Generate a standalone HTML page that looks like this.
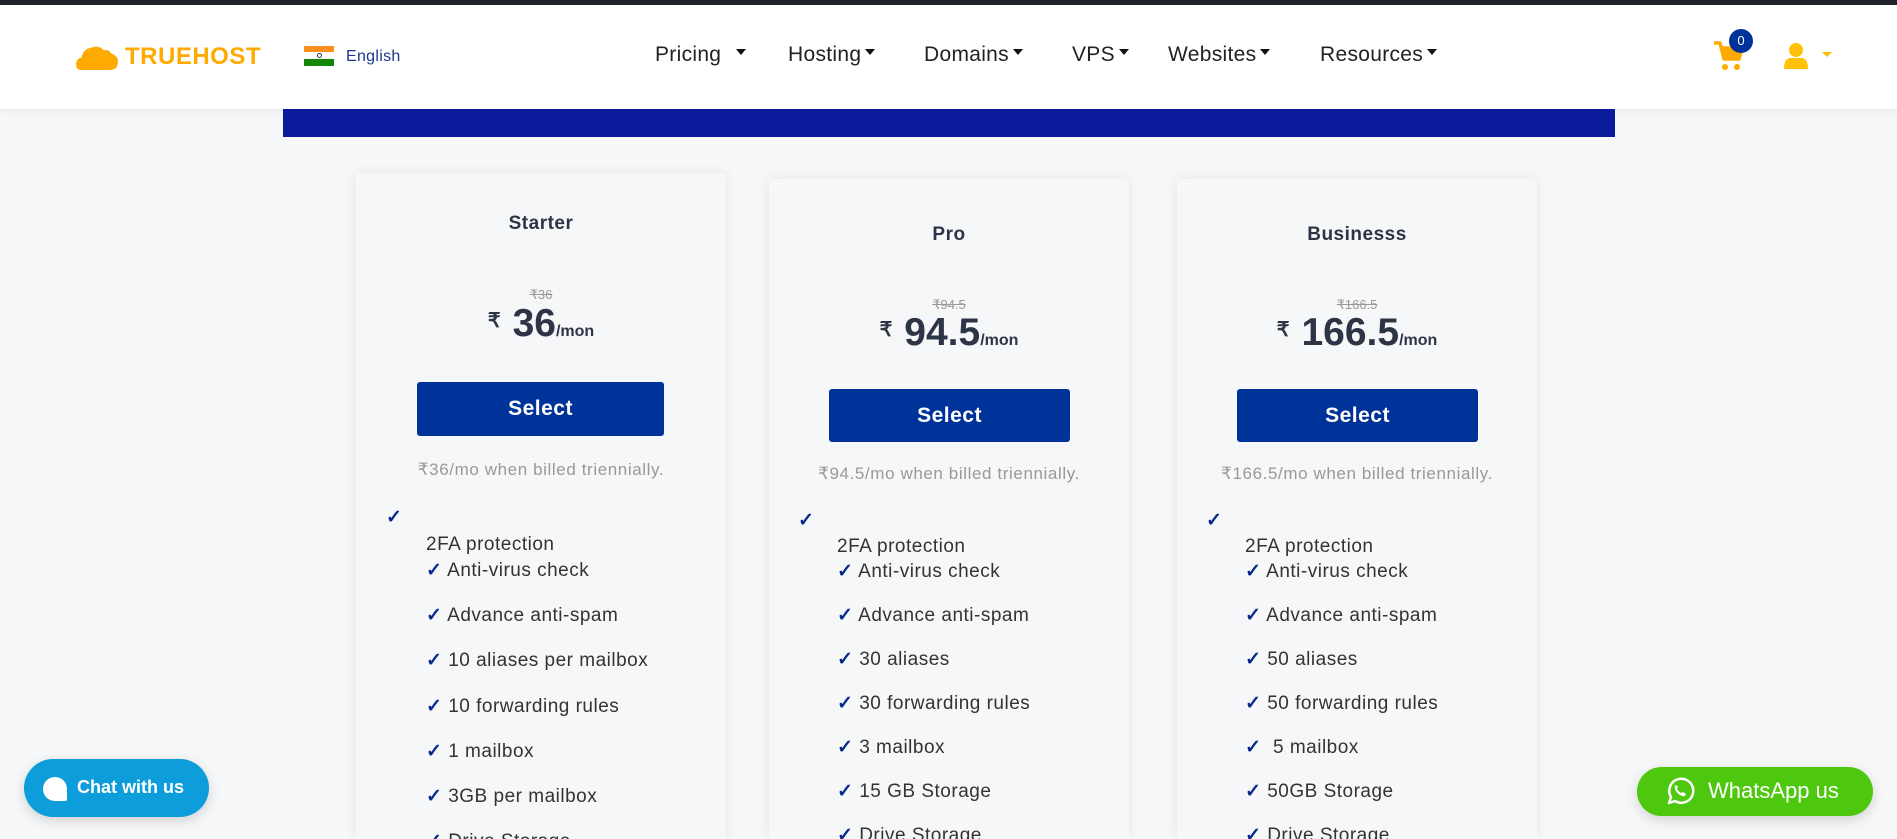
<!DOCTYPE html>
<html style="overflow:hidden;height:839px"><head><meta charset="utf-8">
<style>
*{margin:0;padding:0;box-sizing:border-box}
body{width:1897px;height:839px;overflow:hidden;background:#f6f7f9;font-family:"Liberation Sans",sans-serif;position:relative;color:#333}
.top{position:absolute;left:0;top:0;width:1897px;height:5px;background:#1f222b}
.hdr{position:absolute;left:0;top:5px;width:1897px;height:104px;background:#fff;box-shadow:0 2px 6px rgba(0,0,0,.06)}
.blue{position:absolute;left:283px;top:109px;width:1332px;height:28px;background:#0a1a9b}
.abs{position:absolute;white-space:nowrap}
.nav{font-size:21px;color:#222;top:43px;letter-spacing:0.3px}
.car{display:inline-block;width:0;height:0;border-left:5px solid transparent;border-right:5px solid transparent;border-top:6px solid #111;vertical-align:middle;margin-left:4px;position:relative;top:-3px}
.card{position:absolute;background:#f6f7f9;box-shadow:0 0 12px rgba(0,0,0,.08);border-radius:4px 4px 0 0}
.c{text-align:center}
.title{font-weight:bold;font-size:19px;color:#2d3446;letter-spacing:0.5px}
.strike{font-size:13px;color:#999;text-decoration:line-through}
.price{font-weight:bold;color:#2d3446;font-size:39px}
.price small{font-size:16px}
.price .r{font-size:20px;vertical-align:top;position:relative;top:6px;margin-right:12px}
.btn{position:absolute;background:#003399;border-radius:3px;color:#fff;font-weight:bold;font-size:21px;text-align:center;letter-spacing:0.5px}
.note{font-size:17px;color:#999;letter-spacing:0.6px}
.it{font-size:19px;color:#333;letter-spacing:0.5px}
.ck{color:#0a2a8a;font-weight:bold}
</style></head><body>
<div class="top"></div>
<div class="hdr"></div>
<div class="blue"></div>
<svg class="abs" style="left:76px;top:42px" width="42" height="28" viewBox="0 0 30 20"><path d="M4 20 Q0 20 0 16 Q0 12 4 11 Q5 5 11 4 Q16 2 20 6 Q23 5 25 8 Q30 10 30 14 Q30 20 24 20Z" fill="#ffaa00"/></svg>
<div class="abs" style="left:125px;top:43px;font-size:24px;font-weight:bold;color:#ffaa00;letter-spacing:0.5px">TRUEHOST</div>
<div class="abs" style="left:304px;top:46px;width:30px;height:20px"><div style="height:6px;background:#ff8f1c"></div><div style="height:7px;background:#fff;display:flex;justify-content:center;align-items:center"><div style="width:5px;height:5px;border:1px solid #336;border-radius:50%"></div></div><div style="height:7px;background:#138808"></div></div>
<div class="abs" style="left:346px;top:48px;font-size:16px;color:#1a3a8a;letter-spacing:0.3px">English</div>
<div class="abs nav" style="left:655px">Pricing <span class="car" style="margin-left:9px"></span></div>
<div class="abs nav" style="left:788px">Hosting<span class="car"></span></div>
<div class="abs nav" style="left:924px">Domains<span class="car"></span></div>
<div class="abs nav" style="left:1072px">VPS<span class="car"></span></div>
<div class="abs nav" style="left:1168px">Websites<span class="car"></span></div>
<div class="abs nav" style="left:1320px">Resources<span class="car"></span></div>
<svg class="abs" style="left:1713px;top:40px" width="32" height="32" viewBox="0 0 32 32"><path d="M1 3h6l4 16h15l3-11H9" fill="none" stroke="#ffaa00" stroke-width="3.5" stroke-linejoin="round"/><path d="M9 8h20l-3 11H11z" fill="#ffaa00"/><circle cx="12" cy="27" r="3" fill="#ffaa00"/><circle cx="24" cy="27" r="3" fill="#ffaa00"/></svg>
<div class="abs" style="left:1729px;top:29px;width:24px;height:24px;border-radius:50%;background:#003399;color:#fff;font-size:13px;text-align:center;line-height:24px">0</div>
<svg class="abs" style="left:1783px;top:43px" width="26" height="26" viewBox="0 0 26 26"><circle cx="13" cy="7" r="7" fill="#ffc107"/><path d="M1 26 Q1 15 8 15 H18 Q25 15 25 26Z" fill="#ffc107"/></svg>
<div class="abs" style="left:1822px;top:52px;width:0;height:0;border-left:5px solid transparent;border-right:5px solid transparent;border-top:5px solid #ffc107"></div>

<div class="card" style="left:356px;top:173px;width:370px;height:666px"></div>
<div class="abs c title" style="left:356px;width:370px;top:213px">Starter</div>
<div class="abs c strike" style="left:356px;width:370px;top:287px">₹36</div>
<div class="abs c price" style="left:356px;width:370px;top:302px"><span class="r">₹</span>36<small>/mon</small></div>
<div class="btn" style="left:417px;top:382px;width:247px;height:54px;line-height:54px">Select</div>
<div class="abs c note" style="left:356px;width:370px;top:460px">₹36/mo when billed triennially.</div>
<div class="abs it ck" style="left:386px;top:506px">✓</div>
<div class="abs it" style="left:426px;top:534px">2FA protection</div>
<div class="abs it" style="left:426px;top:559px"><span class="ck">✓</span> Anti-virus check</div>
<div class="abs it" style="left:426px;top:604px"><span class="ck">✓</span> Advance anti-spam</div>
<div class="abs it" style="left:426px;top:649px"><span class="ck">✓</span> 10 aliases per mailbox</div>
<div class="abs it" style="left:426px;top:695px"><span class="ck">✓</span> 10 forwarding rules</div>
<div class="abs it" style="left:426px;top:740px"><span class="ck">✓</span> 1 mailbox</div>
<div class="abs it" style="left:426px;top:785px"><span class="ck">✓</span> 3GB per mailbox</div>
<div class="abs it" style="left:426px;top:830px;height:9px;overflow:hidden"><span class="ck">✓</span> Drive Storage</div>

<div class="card" style="left:769px;top:179px;width:360px;height:660px"></div>
<div class="abs c title" style="left:769px;width:360px;top:224px">Pro</div>
<div class="abs c strike" style="left:769px;width:360px;top:297px">₹94.5</div>
<div class="abs c price" style="left:769px;width:360px;top:311px"><span class="r">₹</span>94.5<small>/mon</small></div>
<div class="btn" style="left:829px;top:389px;width:241px;height:53px;line-height:53px">Select</div>
<div class="abs c note" style="left:769px;width:360px;top:464px">₹94.5/mo when billed triennially.</div>
<div class="abs it ck" style="left:798px;top:509px">✓</div>
<div class="abs it" style="left:837px;top:536px">2FA protection</div>
<div class="abs it" style="left:837px;top:560px"><span class="ck">✓</span> Anti-virus check</div>
<div class="abs it" style="left:837px;top:604px"><span class="ck">✓</span> Advance anti-spam</div>
<div class="abs it" style="left:837px;top:648px"><span class="ck">✓</span> 30 aliases</div>
<div class="abs it" style="left:837px;top:692px"><span class="ck">✓</span> 30 forwarding rules</div>
<div class="abs it" style="left:837px;top:736px"><span class="ck">✓</span> 3 mailbox</div>
<div class="abs it" style="left:837px;top:780px"><span class="ck">✓</span> 15 GB Storage</div>
<div class="abs it" style="left:837px;top:824px;height:15px;overflow:hidden"><span class="ck">✓</span> Drive Storage</div>

<div class="card" style="left:1177px;top:179px;width:360px;height:660px"></div>
<div class="abs c title" style="left:1177px;width:360px;top:224px">Businesss</div>
<div class="abs c strike" style="left:1177px;width:360px;top:297px">₹166.5</div>
<div class="abs c price" style="left:1177px;width:360px;top:311px"><span class="r">₹</span>166.5<small>/mon</small></div>
<div class="btn" style="left:1237px;top:389px;width:241px;height:53px;line-height:53px">Select</div>
<div class="abs c note" style="left:1177px;width:360px;top:464px">₹166.5/mo when billed triennially.</div>
<div class="abs it ck" style="left:1206px;top:509px">✓</div>
<div class="abs it" style="left:1245px;top:536px">2FA protection</div>
<div class="abs it" style="left:1245px;top:560px"><span class="ck">✓</span> Anti-virus check</div>
<div class="abs it" style="left:1245px;top:604px"><span class="ck">✓</span> Advance anti-spam</div>
<div class="abs it" style="left:1245px;top:648px"><span class="ck">✓</span> 50 aliases</div>
<div class="abs it" style="left:1245px;top:692px"><span class="ck">✓</span> 50 forwarding rules</div>
<div class="abs it" style="left:1245px;top:736px"><span class="ck">✓</span>&nbsp; 5 mailbox</div>
<div class="abs it" style="left:1245px;top:780px"><span class="ck">✓</span> 50GB Storage</div>
<div class="abs it" style="left:1245px;top:824px;height:15px;overflow:hidden"><span class="ck">✓</span> Drive Storage</div>

<div class="abs" style="left:24px;top:759px;width:185px;height:58px;border-radius:29px;background:#0d9ddb;box-shadow:0 4px 12px rgba(0,0,0,.15)"></div>
<div class="abs" style="left:43px;top:777px;width:24px;height:24px;background:#fff;border-radius:12px 12px 2px 12px"></div>
<div class="abs" style="left:77px;top:777px;font-size:18px;font-weight:bold;color:#fff">Chat with us</div>
<div class="abs" style="left:1637px;top:767px;width:236px;height:49px;border-radius:25px;background:#4dc80e;box-shadow:0 4px 12px rgba(0,0,0,.15)"></div>
<svg class="abs" style="left:1665px;top:776px" width="30" height="30" viewBox="0 0 30 30"><path d="M4 27 L6 21 A12 12 0 1 1 10 25 Z" fill="none" stroke="#fff" stroke-width="2.5" stroke-linejoin="round"/><path d="M11 9 Q9 10 10 13 Q12 18 17 20 Q20 21 21 18 L18 16 L16 17 Q13 15 12 13 L13 11 Z" fill="#fff"/></svg>
<div class="abs" style="left:1708px;top:778px;font-size:22px;color:#fff">WhatsApp us</div>
</body></html>
